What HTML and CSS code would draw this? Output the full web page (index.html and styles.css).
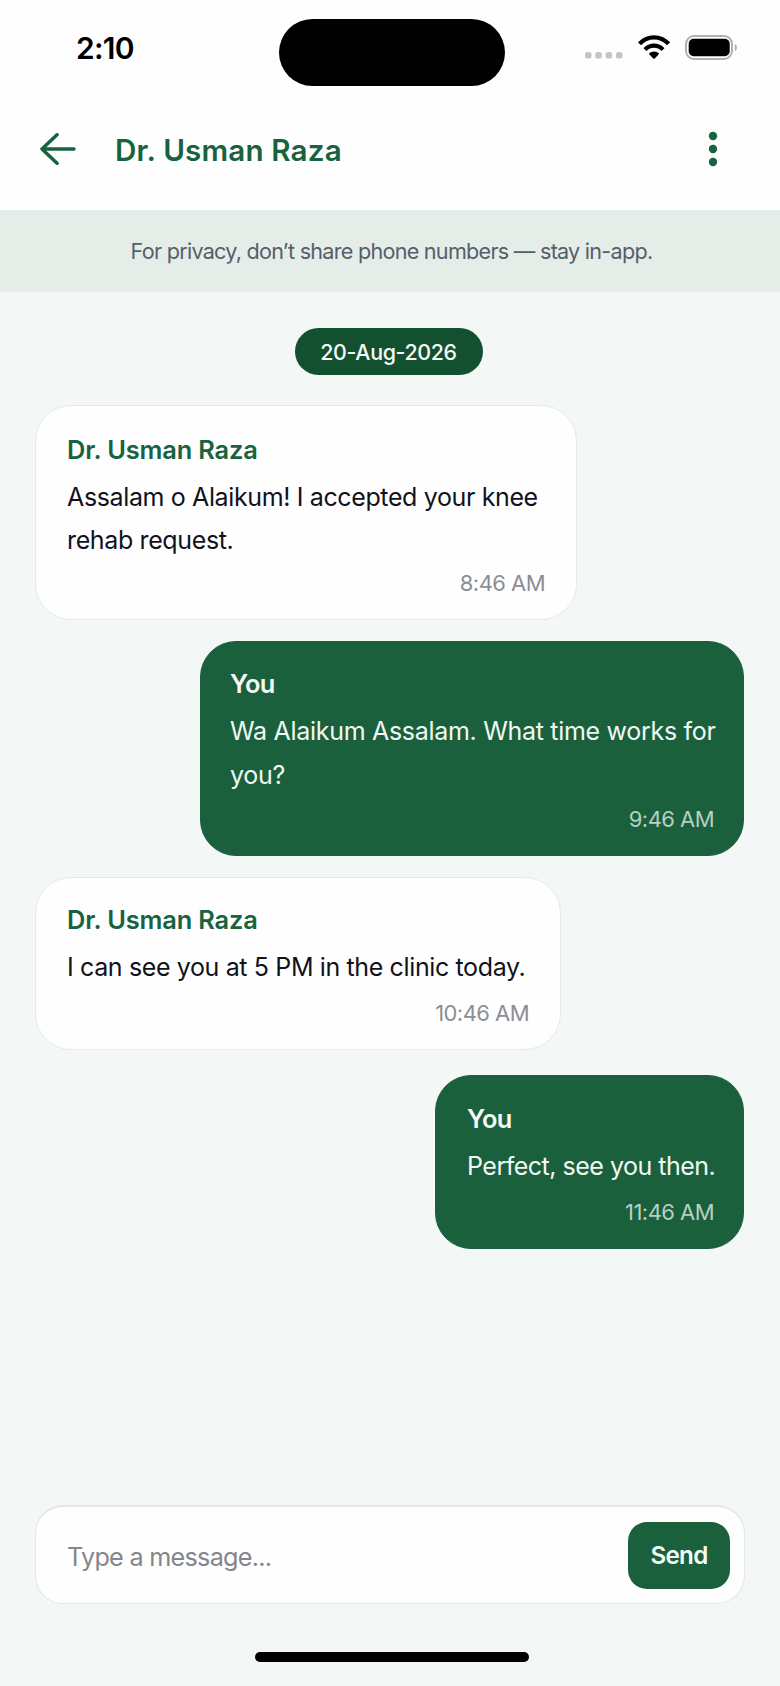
FILE: index.html
```html
<!DOCTYPE html>
<html lang="en">
<head>
<meta charset="utf-8">
<meta name="viewport" content="width=device-width, initial-scale=1">
<title>Chat – Dr. Usman Raza</title>
<link rel="stylesheet" href="styles.css">
</head>
<body>
<div class="screen">
  <div class="status-bar">
    <div class="clock">2:10</div>
    <div class="island"></div>
    <div class="indicators">
      <svg class="signal" width="38" height="8" viewBox="0 0 38 8" fill="#c4c4c4"><rect x="0" y="1" width="6.500" height="6.500" rx="2.6"/><rect x="10.300" y="1" width="6.500" height="6.500" rx="2.6"/><rect x="20.600" y="1" width="6.500" height="6.500" rx="2.6"/><rect x="31" y="1" width="6.500" height="6.500" rx="2.6"/></svg>
      <svg class="wifi" width="32" height="24" viewBox="0 0 32 24"><g fill="none" stroke="#000" stroke-width="4.200"><path d="M1.5 8.8C9.5 .2 22.500 .2 30.500 8.800"/><path d="M7 14.600C12 9.400 20 9.400 25 14.600"/></g><path d="M10.800 18.700C13.800 15.700 18.200 15.700 21.200 18.700L17 23.200Q16 24.200 15 23.200Z"/></svg>
      <svg class="battery" width="53" height="25" viewBox="0 0 53 25"><rect x="1" y="1" width="46" height="23" rx="8" fill="#fff" stroke="#b0b0b0" stroke-width="2"/><rect x="3.700" y="3.700" width="41" height="17.600" rx="5"/><path d="M49.800 9C52.600 9.800 52.600 15.200 49.800 16Z" fill="#b0b0b0"/></svg>
    </div>
  </div>
  <header class="header">
    <svg class="back" width="36" height="32" viewBox="0 0 36 32" fill="none" stroke="#17633f" stroke-width="3.500" stroke-linecap="round" stroke-linejoin="round"><path d="M34 16H2M17 1.800L2 16L17 30.200"/></svg>
    <h1 class="title">Dr. Usman Raza</h1>
    <svg class="menu" width="10" height="36" viewBox="0 0 10 36" fill="#17633f"><circle cx="5" cy="5" r="4.200"/><circle cx="5" cy="18" r="4.200"/><circle cx="5" cy="31" r="4.200"/></svg>
  </header>
  <div class="notice">For privacy, don’t share phone numbers — stay in-app.</div>
  <main class="chat">
    <div class="date">20-Aug-2026</div>
    <article class="bubble received first">
      <div class="name">Dr. Usman Raza</div>
      <div class="text">Assalam o Alaikum! I accepted your knee<br>rehab request.</div>
      <div class="time">8:46 AM</div>
    </article>
    <article class="bubble sent second">
      <div class="name">You</div>
      <div class="text">Wa Alaikum Assalam. What time works for<br>you?</div>
      <div class="time">9:46 AM</div>
    </article>
    <article class="bubble received third">
      <div class="name">Dr. Usman Raza</div>
      <div class="text">I can see you at 5 PM in the clinic today.</div>
      <div class="time">10:46 AM</div>
    </article>
    <article class="bubble sent fourth">
      <div class="name">You</div>
      <div class="text">Perfect, see you then.</div>
      <div class="time">11:46 AM</div>
    </article>
  </main>
  <footer class="footer">
    <div class="composer">
      <span class="placeholder">Type a message...</span>
      <button class="send" type="button">Send</button>
    </div>
    <div class="home"></div>
  </footer>
</div>
</body>
</html>
```
FILE: styles.css
```css
* { box-sizing: border-box; }

body {
  margin: 0;
  font-family: Inter, "Noto Sans", sans-serif;
  color: #11121c;
}

.screen {
  width: 780px;
  height: 1686px;
  display: flex;
  flex-direction: column;
  background: #f3f7f5;
  overflow: hidden;
}

/* Status bar */
.status-bar {
  height: 100px;
  display: grid;
  grid-template-columns: 279px 226px 1fr;
  background: #fefefe;
}

.clock {
  padding: 30px 0 0 76px;
  font-size: 30px;
  line-height: 36px;
  font-weight: 600;
  letter-spacing: -0.7px;
  color: #000;
}

.island {
  height: 67px;
  margin-top: 19px;
  border-radius: 34px;
  background: #000;
}

.indicators {
  display: flex;
  align-items: flex-start;
  padding-left: 80px;
}

.signal { margin-top: 51px; }
.wifi { margin: 35px 0 0 15px; }
.battery { margin: 35px 0 0 15px; }

/* Header */
.header {
  height: 110px;
  display: flex;
  align-items: center;
  padding: 0 62px 12px 40px;
  background: #fefefe;
}

.title {
  margin: 1px 0 0 39px;
  font-size: 29.6px;
  line-height: 40px;
  font-weight: 600;
  letter-spacing: 0.15px;
  color: #17633f;
}

.menu { margin: 0 0 0 auto; }

.notice {
  height: 82px;
  padding-left: 3px;
  text-align: center;
  line-height: 82px;
  font-size: 21.600px;
  font-weight: 380;
  letter-spacing: -0.740px;
  color: #555f69;
  background: #e5ede9;
}

/* Conversation */
.chat {
  flex: 1;
  display: flex;
  flex-direction: column;
  padding: 36px 36px 0 35px;
}

.date {
  align-self: center;
  width: 188px;
  height: 47px;
  margin: 0 2px 30px 0;
  border-radius: 24px;
  text-align: center;
  font-size: 21.400px;
  line-height: 48px;
  font-weight: 500;
  letter-spacing: -0.350px;
  color: #f6fbf8;
  background: #13502f;
}

.bubble {
  display: flex;
  flex-direction: column;
  padding: 26.800px 31px 22px 31px;
  border: 1px solid #e5e9e7;
  border-radius: 36px;
}

.received {
  align-self: flex-start;
  background: #fefefe;
}

.sent {
  align-self: flex-end;
  padding-right: 29px;
  padding-left: 29px;
  border-color: #1b603d;
  background: #1b603d;
  color: #f0f8f3;
}

.first { width: 542px; padding-top: 27.800px; }
.second { width: 544px; padding-top: 25.300px; margin-top: 21px; }
.third { width: 526px; margin-top: 21px; }
.fourth { width: 309px; margin-top: 24.500px; padding-left: 31px; }

.name {
  font-size: 25.400px;
  line-height: 32px;
  font-weight: 600;
  letter-spacing: -0.150px;
  color: #17633f;
}

.sent .name { color: #f4faf6; font-weight: 620; letter-spacing: -0.700px; }

.text {
  margin-top: 9px;
  white-space: nowrap;
  font-size: 25px;
  line-height: 44px;
  font-weight: 370;
  letter-spacing: -0.370px;
}

.first .text { margin-top: 10.500px; line-height: 43px; }
.second .text { line-height: 44.500px; letter-spacing: -0.300px; }
.fourth .text { letter-spacing: -0.500px; }

.time {
  align-self: flex-end;
  margin-top: 10px;
  font-size: 22px;
  line-height: 28px;
  font-weight: 370;
  letter-spacing: -0.550px;
  color: #8c8e94;
}

.first .time, .second .time { margin-top: 7px; }
.sent .time { color: #b6d0c1; }

/* Composer */
.footer {
  height: 181px;
  padding: 0 35px;
}

.composer {
  height: 99px;
  display: flex;
  align-items: center;
  justify-content: space-between;
  padding: 0 14px 0 31px;
  border: 1px solid #e3e7e5;
  border-top-width: 2px;
  border-radius: 28px;
  background: #fefefe;
}

.placeholder {
  margin-top: 4px;
  font-size: 25.200px;
  line-height: 32px;
  font-weight: 370;
  letter-spacing: -0.720px;
  color: #83868c;
}

.send {
  width: 102px;
  height: 67px;
  padding: 0;
  border: 0;
  border-radius: 19px;
  font: 560 24.200px Inter, "Noto Sans", sans-serif;
  letter-spacing: -0.700px;
  color: #f2faf5;
  background: #1b603d;
}

.home {
  width: 274px;
  height: 10px;
  margin: 48px auto 0;
  border-radius: 5px;
  background: #000;
  transform: translateX(2px);
}
```
